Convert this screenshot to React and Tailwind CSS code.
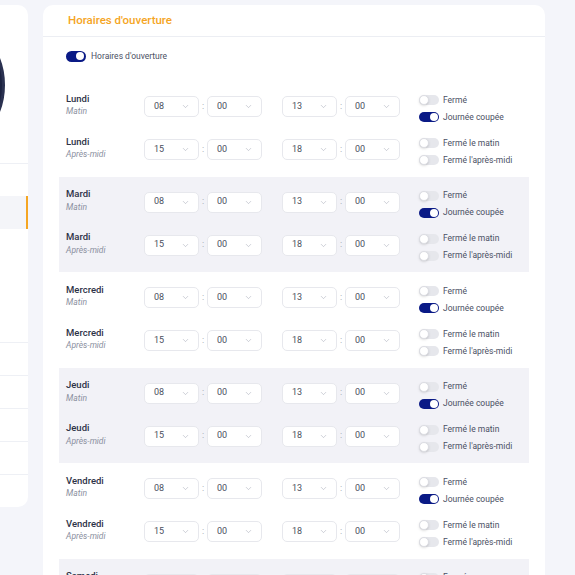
import { ChevronDown } from "lucide-react";

const days = ["Lundi", "Mardi", "Mercredi", "Jeudi", "Vendredi", "Samedi", "Dimanche"];

function Toggle({ on }) {
  if (on) {
    return (
      <span className="relative inline-block h-[10px] w-[20px] shrink-0 rounded-full bg-[#0a1a86]">
        <span className="absolute left-[11px] top-[1px] h-[8px] w-[8px] rounded-full bg-white" />
      </span>
    );
  }
  return (
    <span className="relative inline-block h-[10px] w-[20px] shrink-0 rounded-full bg-[#e6e7ec]">
      <span className="absolute left-0 top-0 h-[10px] w-[10px] rounded-full border border-[#dcdde3] bg-white shadow-sm" />
    </span>
  );
}

function Select({ value }) {
  return (
    <div className="flex h-[21px] w-[55px] items-center justify-between rounded-[5px] border border-[#e7e8ed] bg-white pl-[9px] pr-[8px] text-[9px] text-[#4a4f5e]">
      <span>{value}</span>
      <ChevronDown size={9} strokeWidth={1.5} className="text-[#a9adb9]" />
    </div>
  );
}

function TimePair({ h, m }) {
  return (
    <div className="flex items-center">
      <Select value={h} />
      <span className="w-[8px] text-center text-[9px] text-[#9a9eab]">:</span>
      <Select value={m} />
    </div>
  );
}

function Row({ day, sub, h1, h2, options }) {
  return (
    <div className="flex h-[34px] items-center">
      <div className="flex w-[78px] flex-col pb-[3px] leading-[13.5px]">
        <span className="text-[9.5px] font-medium text-[#2e3347]">{day}</span>
        <span className="text-[8.5px] italic text-[#8b90a0]">{sub}</span>
      </div>
      <TimePair h={h1} m="00" />
      <div className="w-[20px]" />
      <TimePair h={h2} m="00" />
      <div className="ml-[19px] mt-[4px] flex flex-col gap-[7px]">
        {options.map((o) => (
          <div key={o.label} className="flex h-[10px] items-center gap-[4px]">
            <Toggle on={o.on} />
            <span className="text-[8.5px] text-[#4b5064]">{o.label}</span>
          </div>
        ))}
      </div>
    </div>
  );
}

function DayGroup({ day, shaded }) {
  return (
    <div className={`flex flex-col gap-[9px] pb-[10px] pl-[7px] pt-[8.5px] ${shaded ? "bg-[#f2f2f7]" : "bg-white"}`}>
      <Row
        day={day}
        sub="Matin"
        h1="08"
        h2="13"
        options={[
          { label: "Fermé", on: false },
          { label: "Journée coupée", on: true },
        ]}
      />
      <Row
        day={day}
        sub="Après-midi"
        h1="15"
        h2="18"
        options={[
          { label: "Fermé le matin", on: false },
          { label: "Fermé l'après-midi", on: false },
        ]}
      />
    </div>
  );
}

export default function App() {
  return (
    <div className="flex min-h-screen items-start gap-[15px] overflow-hidden bg-[#f4f5fa] pt-[5px] font-['Roboto',sans-serif]">
      {/* profile side card, mostly off screen */}
      <div className="-ml-[162px] flex w-[190px] shrink-0 flex-col overflow-hidden rounded-[10px] bg-white">
        <div className="flex h-[158px] justify-center pt-[8px]">
          <div className="h-[144px] w-[144px] rounded-full border-[3px] border-[#2a3150] bg-[#1b2240]" />
        </div>
        <div className="h-[33px] border-t border-[#eef0f5]" />
        <div className="h-[33px] border-r-2 border-[#f5a623] bg-[#f4f5f9]" />
        <div className="h-[113px]" />
        <div className="h-[33px] border-t border-[#eef0f5]" />
        <div className="h-[33px] border-t border-[#eef0f5]" />
        <div className="h-[33px] border-t border-[#eef0f5]" />
        <div className="h-[33px] border-t border-[#eef0f5]" />
        <div className="h-[33px] border-t border-[#eef0f5]" />
      </div>

      <div className="w-[502px] shrink-0 rounded-[10px] bg-white">
        <div className="flex h-[32px] items-center border-b border-[#eceef3] px-[25px] text-[11.5px] font-medium text-[#f5a524]">
          Horaires d'ouverture
        </div>
        <div className="px-[16px] pt-[13px]">
          <div className="mb-[19px] flex h-[12px] items-center gap-[5px] pl-[7px]">
            <span className="relative inline-block h-[11px] w-[20px] rounded-full bg-[#0a1a86]">
              <span className="absolute left-[10px] top-[1.5px] h-[8px] w-[8px] rounded-full bg-white" />
            </span>
            <span className="text-[8.5px] text-[#4b5064]">Horaires d'ouverture</span>
          </div>
          {days.map((d, i) => (
            <DayGroup key={d} day={d} shaded={i % 2 === 1} />
          ))}
        </div>
      </div>
    </div>
  );
}
